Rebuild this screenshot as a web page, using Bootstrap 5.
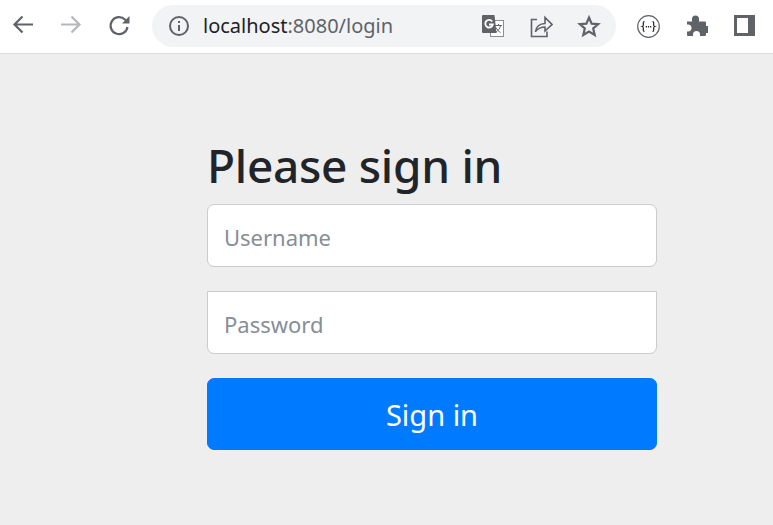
<!DOCTYPE html>
<html lang="en">
<head>
    <meta charset="UTF-8" />
    <meta name="viewport" content="width=device-width, initial-scale=1" />
    <title>Please sign in</title>
    <link href="https://cdn.jsdelivr.net/npm/bootstrap@5.3.3/dist/css/bootstrap.min.css" rel="stylesheet" />
    <style>
        html, body { height: 100%; }
        body {
            background-color: #eee;
            font-family: "Noto Sans", "Open Sans", sans-serif;
            overflow: hidden;
        }
        .chrome-bar {
            height: 54px;
            background: #fff;
            border-bottom: 1px solid #dadce0;
            padding: 0 0 1px 11px;
        }
        .chrome-btn { width: 24px; height: 24px; flex: none; }
        .chrome-btn + .chrome-btn { margin-left: 24px; }
        .addr-pill {
            width: 464px;
            height: 42px;
            margin-left: 21px;
            background: #f1f3f4;
            border-radius: 21px;
            padding-left: 16px;
            flex: none;
        }
        .addr-text {
            font-size: 20px;
            line-height: 1;
            margin-left: 13px;
            color: #5f6368;
        }
        .addr-text b { font-weight: 400; color: #202124; }
        .addr-icons { margin-left: auto; padding-right: 15px; gap: 24px; }
        .ext-icons { margin-left: 20px; gap: 24px; }
        .signin-form { width: 450px; margin: 82px 0 0 207px; }
        .signin-title {
            font-size: 46px;
            line-height: 58px;
            font-weight: 500;
            color: #212529;
            margin-bottom: 10px;
            letter-spacing: -.3px;
        }
        .signin-input.form-control {
            height: 63px;
            font-size: 22px;
            padding: 2px 16px 0;
            border-color: #ccc;
            border-radius: 7px;
            margin-bottom: 24px;
        }
        .signin-input::placeholder { color: #868e96; opacity: 1; }
        .signin-input.pw-input { border-top-left-radius: 0; border-top-right-radius: 0; }
        .signin-btn.btn {
            height: 72px;
            font-size: 29px;
            padding-top: 8px;
            background: #007bff;
            border-color: #007bff;
            border-radius: 7px;
        }
    </style>
</head>
<body>
    <div class="chrome-bar d-flex align-items-center">
        <svg class="chrome-btn" viewBox="0 0 24 24" fill="none" stroke="#5f6368" stroke-width="2.200"><path d="M22 10.500H4M11.500 2.500 3.500 10.500l8 8"/></svg>
        <svg class="chrome-btn" viewBox="0 0 24 24" fill="none" stroke="#b5b7ba" stroke-width="2.200"><path d="M2 10.500h18M12.500 2.500l8 8-8 8"/></svg>
        <svg class="chrome-btn" viewBox="0 0 24 24" fill="none" stroke="#5f6368" stroke-width="2.200"><path d="M20.500 13A8.500 8.500 0 1 1 18 5.500L20.500 8"/><path d="M22.500 2v7.500H15z" fill="#5f6368" stroke="none"/></svg>
        <div class="addr-pill d-flex align-items-center">
            <svg width="22" height="22" viewBox="0 0 22 22" class="flex-shrink-0"><circle cx="11" cy="11" r="9" fill="none" stroke="#5f6368" stroke-width="2"/><path d="M10 10h2v6h-2zM10 6h2v2h-2z" fill="#5f6368"/></svg>
            <span class="addr-text"><b>localhost</b>:8080/login</span>
            <div class="addr-icons d-flex align-items-center">
                <svg width="24" height="24" viewBox="0 0 24 24"><rect x="9.500" y="6.500" width="13" height="16" fill="#fff" stroke="#8a8d91" stroke-width="1"/><path d="M2 1h11.500l2 18H2a1 1 0 0 1-1-1V2a1 1 0 0 1 1-1z" fill="#5f6368"/><path d="M11.200 7.500a3.800 3.800 0 1 0 .6 3H8" fill="none" stroke="#fff" stroke-width="1.800"/><path d="M14 11.500h7M17.500 10v1.500M19.500 11.500c-.5 3-2.500 5.500-5 7M15 13.500c1 2 2.500 4 4.500 5" fill="none" stroke="#5f6368" stroke-width="1"/></svg>
                <svg width="24" height="24" viewBox="0 0 24 24" fill="none" stroke="#5f6368" stroke-width="1.600"><path d="M8 5.500H2.500v17h15.500v-5"/><path d="M6.500 18c.5-5 4-8.500 9.500-8.500V3.500l7 7-7 6.500v-4c-4 0-7 1.500-9.500 4.500z"/></svg>
                <svg width="24" height="24" viewBox="0 0 24 24" fill="none" stroke="#5f6368" stroke-width="2.200"><path d="m12 3.500 2.600 6.100 6.600.6-5 4.300 1.500 6.500-5.700-3.400-5.700 3.400 1.500-6.500-5-4.300 6.600-.6z"/></svg>
            </div>
        </div>
        <div class="ext-icons d-flex align-items-center">
            <svg width="24" height="24" viewBox="0 0 24 24"><circle cx="12.500" cy="12.500" r="10.800" fill="#fff" stroke="#5f6368" stroke-width="1.200"/><path d="M8.500 7.500c-2 0-.8 3.500-1.300 4.300-.3.500-1 .7-1 .7s.7.200 1 .7c.5.800-.7 4.300 1.300 4.300M16.500 7.500c2 0 .8 3.500 1.300 4.300.3.500 1 .7 1 .7s-.7.200-1 .7c-.5.800.7 4.300-1.300 4.300" fill="none" stroke="#202124" stroke-width="1.200"/><path d="M9.800 12.800h5.400" stroke="#202124" stroke-width="1.500" stroke-dasharray="1.200 .9"/></svg>
            <svg width="24" height="24" viewBox="0 0 24 24"><path d="M3 7.500h5V5a3.500 3.500 0 0 1 7 0v2.500h6a1 1 0 0 1 1 1V12h1a3.500 3.500 0 0 1 0 7h-1v2a1 1 0 0 1-1 1h-5v-1.500a3.500 3.500 0 0 0-7 0V22H4a1 1 0 0 1-1-1v-3.500h1a3.500 3.500 0 0 0 0-7H3z" fill="#5f6368"/></svg>
            <svg width="24" height="24" viewBox="0 0 24 24"><rect x="2" y="1" width="21" height="21" fill="#5f6368"/><rect x="5" y="4" width="11" height="15" fill="#fff"/></svg>
        </div>
    </div>
    <form class="signin-form">
        <h2 class="signin-title">Please sign in</h2>
        <input type="text" class="form-control signin-input" placeholder="Username" />
        <input type="password" class="form-control signin-input pw-input" placeholder="Password" />
        <button type="button" class="btn btn-primary w-100 d-block signin-btn">Sign in</button>
    </form>
    <script src="https://cdn.jsdelivr.net/npm/bootstrap@5.3.3/dist/js/bootstrap.bundle.min.js"></script>
</body>
</html>
